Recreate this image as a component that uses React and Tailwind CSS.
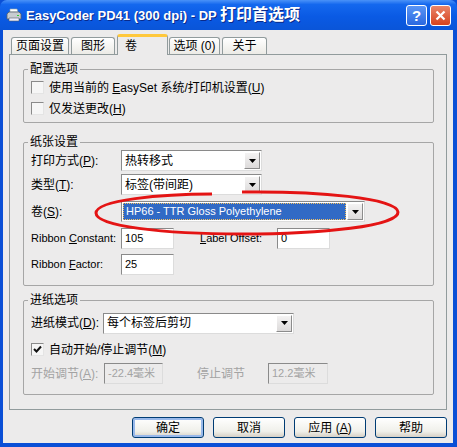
import React from "react";

const font = "font-['Liberation_Sans','Noto_Sans_CJK_SC',sans-serif]";

const DropButton = () => (
  <div className="flex h-[17px] w-[16px] shrink-0 items-center justify-center border border-t-white border-l-white border-b-[#8c8c8c] border-r-[#8c8c8c] bg-[linear-gradient(#f4f3f3,#dcdada)]">
    <svg width="7" height="4" viewBox="0 0 7 4">
      <path d="M0 0h7L3.5 4z" fill="#000" />
    </svg>
  </div>
);

const Combo = ({ value, className = "", selected = false }) => (
  <div
    className={`flex h-[21px] items-center border border-t-[#8a8a8a] border-l-[#8a8a8a] border-b-[#dcdcdc] border-r-[#dcdcdc] bg-white p-[1px] ${className}`}
  >
    <div
      className={`mr-[1px] flex h-full min-w-0 flex-1 items-center px-[2px] ${
        selected
          ? "border border-dotted border-[#f4c060] bg-[#316ac5] text-white"
          : "text-black"
      }`}
    >
      <span className={selected ? "text-[11px] leading-none" : "text-[12px] leading-none"}>
        {value}
      </span>
    </div>
    <DropButton />
  </div>
);

const TextBox = ({ value, className = "", disabled = false }) => (
  <div
    className={`flex h-[21px] items-center border border-t-[#8a8a8a] border-l-[#8a8a8a] border-b-[#dcdcdc] border-r-[#dcdcdc] px-[3px] text-[11px] leading-none ${
      disabled ? "bg-[#ecebeb] text-[#a3a3a3]" : "bg-white text-black"
    } ${className}`}
  >
    {value}
  </div>
);

const CheckBox = ({ checked = false }) => (
  <div className="flex h-[13px] w-[13px] shrink-0 items-center justify-center border border-t-[#8a8a8a] border-l-[#8a8a8a] border-b-[#e4e4e4] border-r-[#e4e4e4] bg-[#f6f6f6]">
    {checked && (
      <svg width="9" height="9" viewBox="0 0 9 9">
        <path d="M1 4l2.5 2.5L8 1.5" stroke="#111" strokeWidth="2" fill="none" />
      </svg>
    )}
  </div>
);

const Group = ({ title, className = "", children }) => (
  <fieldset
    className={`rounded-[2px] border border-[#a6a6a6] pl-[7px] ${className}`}
  >
    <legend className="-ml-[3px] px-[2px] text-[12px] leading-[16px] text-black">
      {title}
    </legend>
    {children}
  </fieldset>
);

const Tab = ({ label, className = "", active = false }) =>
  active ? (
    <div
      className={`relative z-10 -mb-[1px] flex h-[21px] items-center rounded-t-[3px] border-x border-[#919b9c] border-t-[3px] border-t-[#ffc83c] bg-[#ecebeb] text-[12px] leading-none ${className}`}
    >
      {label}
    </div>
  ) : (
    <div
      className={`flex h-[17px] items-center justify-center rounded-t-[3px] border-x border-t border-[#919b9c] bg-[linear-gradient(#ffffff,#ecebe6)] text-[12px] leading-none ${className}`}
    >
      {label}
    </div>
  );

const Button = ({ children, primary = false }) => (
  <button
    type="button"
    className={`flex h-[21px] w-[72px] items-center justify-center rounded-[3px] border border-[#003c74] bg-[linear-gradient(#ffffff,#f0f0ea_70%,#d6d0c5)] text-[12px] leading-none text-black ${
      primary ? "shadow-[inset_0_0_0_2px_#98b8ea]" : ""
    }`}
  >
    {children}
  </button>
);

export default function App() {
  return (
    <div className={`relative flex h-[447px] w-[457px] flex-col overflow-hidden bg-[#0a4fd6] ${font}`}>
      {/* title bar */}
      <div className="flex h-[30px] shrink-0 items-center rounded-t-[7px] bg-[linear-gradient(#4a92f8,#1468ee_15%,#0a5ae4_55%,#0a55d8)] pl-[6px] pr-[6px]">
        <svg width="16" height="16" viewBox="0 0 16 16" className="mr-[4px]">
          <path d="M4 2h7l1 3H4z" fill="#fff" stroke="#9aa" strokeWidth="0.6" />
          <path d="M1 7l2-2h10l2 2v5H1z" fill="#c8ccd0" stroke="#55606a" strokeWidth="0.8" />
          <path d="M3 11h10v3H3z" fill="#eef" stroke="#55606a" strokeWidth="0.6" />
          <rect x="11" y="8" width="2" height="1" fill="#3c3" />
        </svg>
        <span className="flex-1 text-[13px] font-bold leading-none text-white [text-shadow:1px_1px_0_#0a2a8a]">
          EasyCoder PD41 (300 dpi) - DP <span className="text-[16px]">打印首选项</span>
        </span>
        <div className="mr-[3px] flex h-[21px] w-[21px] items-center justify-center rounded-[3px] border border-white bg-[linear-gradient(#5a95f5,#2a68e0)] text-[15px] font-bold leading-none text-white">
          ?
        </div>
        <div className="flex h-[21px] w-[21px] items-center justify-center rounded-[3px] border border-white bg-[linear-gradient(#e9856a,#d6431e)]">
          <svg width="11" height="11" viewBox="0 0 11 11">
            <path d="M1.5 1.5l8 8M9.5 1.5l-8 8" stroke="#fff" strokeWidth="2.2" />
          </svg>
        </div>
      </div>

      {/* client area */}
      <div className="ml-[3px] mr-[4px] mb-[4px] flex flex-1 flex-col bg-[#ecebeb] text-black">
        <div className="ml-[8px] mt-[4px] flex items-end">
          <Tab label="页面设置" className="w-[58px]" />
          <Tab label="图形" className="ml-[2px] w-[44px]" />
          <Tab label="卷" active className="ml-[2px] w-[51px] pl-[7px]" />
          <Tab label="选项 (0)" className="ml-[1px] w-[51px]" />
          <Tab label="关于" className="ml-[2px] w-[45px]" />
        </div>

        <div className="ml-[6px] flex h-[356px] w-[438px] flex-col border border-[#919b9c] bg-[#ecebeb] pl-[13px] pr-[12px]">
          <Group title="配置选项" className="mt-[6px] h-[62px]">
            <div className="flex h-[21px] items-center">
              <CheckBox />
              <span className="ml-[5px] text-[12px] leading-none">
                使用当前的 <u>E</u>asySet 系统/打印机设置(<u>U</u>)
              </span>
            </div>
            <div className="flex h-[21px] items-center">
              <CheckBox />
              <span className="ml-[5px] text-[12px] leading-none">
                仅发送更改(<u>H</u>)
              </span>
            </div>
          </Group>

          <Group title="纸张设置" className="mt-[11px] h-[152px]">
            <div className="flex h-[21px] items-center">
              <span className="w-[90px] text-[12px] leading-none">
                打印方式(<u>P</u>):
              </span>
              <Combo value="热转移式" className="w-[141px]" />
            </div>
            <div className="mt-[3px] flex h-[21px] items-center">
              <span className="w-[90px] text-[12px] leading-none">
                类型(<u>T</u>):
              </span>
              <Combo value="标签(带间距)" className="w-[141px]" />
            </div>
            <div className="mt-[6px] flex h-[21px] items-center">
              <span className="w-[90px] text-[12px] leading-none">
                卷(<u>S</u>):
              </span>
              <Combo
                value="HP66 - TTR Gloss Polyethylene"
                selected
                className="w-[244px]"
              />
            </div>
            <div className="mt-[6px] flex h-[21px] items-center">
              <span className="w-[90px] text-[11px] leading-none">
                Ribbon <u>C</u>onstant:
              </span>
              <TextBox value="105" className="w-[53px]" />
              <span className="ml-[26px] w-[77px] text-[11px] leading-none">
                <u>L</u>abel Offset:
              </span>
              <TextBox value="0" className="w-[53px]" />
            </div>
            <div className="mt-[5px] flex h-[21px] items-center">
              <span className="w-[90px] text-[11px] leading-none">
                Ribbon <u>F</u>actor:
              </span>
              <TextBox value="25" className="w-[53px]" />
            </div>
          </Group>

          <Group title="进纸选项" className="mt-[6px] h-[103px]">
            <div className="mt-[5px] flex h-[20px] items-center">
              <span className="w-[72px] text-[12px] leading-none">
                进纸模式(<u>D</u>):
              </span>
              <Combo value="每个标签后剪切" className="h-[20px] w-[191px]" />
            </div>
            <div className="mt-[6px] flex h-[21px] items-center">
              <CheckBox checked />
              <span className="ml-[5px] text-[12px] leading-none">
                自动开始/停止调节(<u>M</u>)
              </span>
            </div>
            <div className="mt-[3px] flex h-[21px] items-center text-[#a3a3a3]">
              <span className="w-[73px] text-[12px] leading-none">
                开始调节(<u>A</u>):
              </span>
              <TextBox value="-22.4毫米" disabled className="w-[59px]" />
              <span className="ml-[34px] w-[71px] text-[12px] leading-none">
                停止调节
              </span>
              <TextBox value="12.2毫米" disabled className="w-[60px]" />
            </div>
          </Group>
        </div>

        <div className="mt-[7px] flex justify-end gap-[9px] pr-[6px]">
          <Button primary>确定</Button>
          <Button>取消</Button>
          <Button>
            应用 (<u>A</u>)
          </Button>
          <Button>帮助</Button>
        </div>
      </div>

      {/* red hand-drawn mark over the roll combo */}
      <svg
        className="pointer-events-none absolute left-[92px] top-[188px]"
        width="312"
        height="50"
        viewBox="0 0 312 50"
      >
        <path
          d="M150 4C225 3 305 10 306 24C307 38 230 46 150 46C70 46 4 38 4 25C4 12 70 6 120 6"
          stroke="#e41414"
          strokeWidth="3"
          fill="none"
        />
      </svg>
    </div>
  );
}
